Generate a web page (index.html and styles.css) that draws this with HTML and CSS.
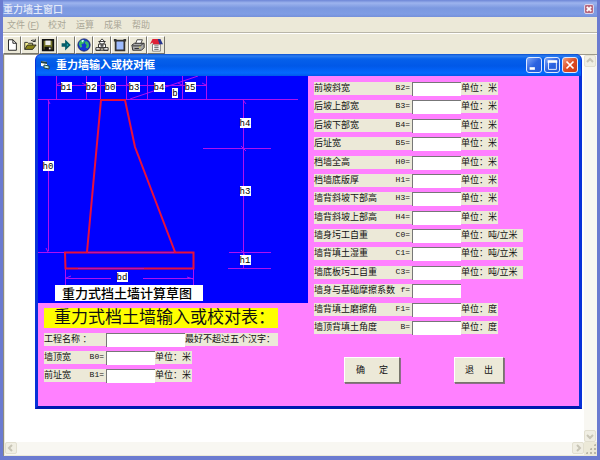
FILE: index.html
```html
<!DOCTYPE html>
<html lang="zh">
<head>
<meta charset="utf-8">
<title>重力墙主窗口</title>
<link rel="stylesheet" href="styles.css">
</head>
<body>
<div class="app">
  <header class="app-title">
    <h1>重力墙主窗口</h1>
    <button class="app-close" type="button" aria-label="关闭"><svg viewBox="0 0 9 9"><path d="M2 2l5 5M7 2l-5 5"/></svg></button>
  </header>
  <nav class="menu">
    <button type="button">文件 (<u>F</u>)</button><button type="button">校对</button><button type="button">运算</button><button type="button">成果</button><button type="button">帮助</button>
  </nav>
  <div class="toolbar">
    <button type="button" aria-label="新建"><svg viewBox="0 0 16 16"><path d="M4 2h5l4 4v8H4z" fill="#fff" stroke="#111"/><path d="M9 2v4h4" fill="none" stroke="#111"/></svg></button>
    <button type="button" aria-label="打开"><svg viewBox="0 0 16 16"><path d="M2 13V5h3l1 1h5v2" fill="#f5ef92" stroke="#222"/><path d="M2 13l3-5h10l-4 5z" fill="#8a8418" stroke="#222"/><path d="M9 3q3-2 5 1M14 1v3h-3" fill="none" stroke="#222"/></svg></button>
    <button type="button" aria-label="保存"><svg viewBox="0 0 16 16"><path d="M2 2h12v12H2z" fill="#77772b" stroke="#111" stroke-width="2"/><path d="M5 3h6v5H5z" fill="#eee"/><path d="M4 10h8v4H4z" fill="#111"/><path d="M9 11h2v2H9z" fill="#eee"/></svg></button>
    <button type="button" aria-label="转到"><svg viewBox="0 0 16 16"><path d="M4 7h4V4l4 4-4 4V9H4z" fill="#18b6bd" stroke="#075d68" stroke-width="2"/></svg></button>
    <button type="button" aria-label="网络"><svg viewBox="0 0 16 16"><circle cx="8" cy="8" r="7" fill="#1537d3" stroke="#102066"/><path d="M3 4l3-2 3 1-1 3-3 1 1 3-2 1-2-4zM10 3l3 2 1 4-2 3-2-1 1-3-2-2z" fill="#36b866"/><path d="M5 3l2-1 1 1-2 2z" fill="#d6f7ff"/></svg></button>
    <button type="button" aria-label="结构"><svg viewBox="0 0 16 16"><g fill="#fff" stroke="#222"><path d="M5 4l3-3 3 3-1 3H6z"/><path d="M4 7h8v4H4zM1 11h5v3H1zM10 11h5v3h-5z"/></g><path d="M4 4h8M8 7v6M6 9h4M1 14h14" stroke="#222"/></svg></button>
    <button type="button" aria-label="图形"><svg viewBox="0 0 16 16"><path d="M3 3h10v11H3z" fill="#9ebcff" stroke="#333" stroke-width="2"/><path d="M1 1h3v3H1zM12 1h3v3h-3z" fill="#333"/></svg></button>
    <button type="button" aria-label="打印"><svg viewBox="0 0 16 16"><path d="M5 7l2-5h6l-2 5z" fill="#fff" stroke="#333"/><path d="M1 8l3-2h11v5l-3 3H2z" fill="#aaa" stroke="#222"/><path d="M2 9h9l3-3M4 12h5" fill="none" stroke="#222"/><path d="M9 10h2v1H9z" fill="#e6df30"/></svg></button>
    <button type="button" aria-label="帮助"><svg viewBox="0 0 16 16"><path d="M4 7h9v8H4z" fill="#fff" stroke="#777"/><path d="M1 7l3-6h9v6H5L4 5z" fill="#df2035"/><path d="M10 1h3l3 6h-4z" fill="#26358e"/><path d="M6 9h5M6 11h5M6 13h5" stroke="#555"/></svg></button>
  </div>
  <main class="desktop">
    <div class="canvas"></div>
    <div class="scroll vertical"><button type="button" aria-label="向上"><svg viewBox="0 0 10 10"><path d="M2 6l3-3 3 3"/></svg></button><button type="button" aria-label="向下"><svg viewBox="0 0 10 10"><path d="M2 4l3 3 3-3"/></svg></button></div>
    <div class="scroll horizontal"><button type="button" aria-label="向左"><svg viewBox="0 0 10 10"><path d="M6 2L3 5l3 3"/></svg></button><button type="button" aria-label="向右"><svg viewBox="0 0 10 10"><path d="M4 2l3 3-3 3"/></svg></button></div>
    <div class="grip"></div>
  </main>

  <section class="dialog" aria-labelledby="dialog-title">
    <header class="dialog-title">
      <svg class="form-icon" viewBox="0 0 10 10"><path d="M1 1l6 1v5L1 6z" fill="#fff"/><path d="M1 1l6 1v2L1 3z" fill="#244"/><path d="M4 5l5 1v3L4 8z" fill="#b8e8e4" stroke="#244"/></svg>
      <h2 id="dialog-title">重力墙输入或校对框</h2>
      <div class="window-buttons">
        <button type="button" aria-label="最小化"><svg viewBox="0 0 16 16"><path d="M3 12h6" stroke-width="3"/></svg></button>
        <button type="button" aria-label="最大化"><svg viewBox="0 0 16 16"><path d="M4 4h9v9H4z"/><path d="M3 4h11" stroke-width="3"/></svg></button>
        <button type="button" class="close" aria-label="关闭"><svg viewBox="0 0 16 16"><path d="M4 4l8 8M12 4l-8 8" stroke-width="2"/></svg></button>
      </div>
    </header>
    <form class="dialog-body">
      <div class="left">
        <svg class="sketch" viewBox="0 0 270 227" role="img" aria-label="重力式挡土墙计算草图">
          <rect width="270" height="227" fill="#00f"/>
          <g class="dim">
            <path d="M18.500 0v23M48.500 0v23M62.500 0v23M88.500 0v23M109.500 0v23M144.500 0v23M168.500 0v23M18 9.500h150M0 23.500h260M92 23L160 0"/>
            <path d="M10.500 24v151M0 176.500h27M205.500 24v169M165 72.500h68M191 176.500h42M190 192.500h43M27.500 192v17M155.500 192v17M28 202.500h45M105 202.500h50"/>
            <path d="M10 24l2 4M10 176l-2-4M205 24l3 4M203 70l5 5M203 174l4 5M28 202l5-2M155 203l-6-2M18 9l4-2M168 9l-4-2M48 9l-4-2M88 9l4-2M144 9l-4-2"/>
          </g>
          <path class="wall" d="M49 176L63 24H87L97 71L137 176M27 176.500H155.500V192.500H27.500z"/>
          <path class="accent" d="M50 176.500h86M40 192.500h66"/>
          <g fill="#fff">
            <path d="M23 6h11v10H23zM48 6h11v10H48zM67 6h11v10H67zM91 6h11v10H91zM116 6h11v10H116zM134 12h6v10H134zM147 6h11v10H147z"/>
            <path d="M5 85h11v10H5zM202 42h11v10H202zM202 110h11v10H202zM202 179h11v10H202zM79 196h11v10H79zM17 209h148v16H17z"/>
          </g>
          <g class="mark">
            <text x="28" y="14">b1</text><text x="53" y="14">b2</text><text x="72" y="14">b0</text><text x="96" y="14">b3</text><text x="121" y="14">b4</text><text x="137" y="20">b</text><text x="152" y="14">b5</text>
            <text x="10" y="93">h0</text><text x="207" y="50">h4</text><text x="207" y="118">h3</text><text x="207" y="187">h1</text><text x="84" y="204">bd</text>
          </g>
          <text class="caption" x="89" y="222">重力式挡土墙计算草图</text>
        </svg>
        <div class="left-form">
          <h3>重力式档土墙输入或校对表：</h3>
          <div class="row"><label for="name">工程名称 ：</label><input id="name" class="wide"><span>最好不超过五个汉字：</span></div>
          <div class="row"><label for="b0">墙顶宽<b>B0=</b></label><input id="b0"><span>单位：米</span></div>
          <div class="row"><label for="b1">前址宽<b>B1=</b></label><input id="b1"><span>单位：米</span></div>
        </div>
      </div>
      <div class="right">
        <div class="rows">
          <div class="row"><label for="b2">前坡斜宽<b>B2=</b></label><input id="b2"><span>单位：米</span></div>
          <div class="row"><label for="b3">后坡上部宽<b>B3=</b></label><input id="b3"><span>单位：米</span></div>
          <div class="row"><label for="b4">后坡下部宽<b>B4=</b></label><input id="b4"><span>单位：米</span></div>
          <div class="row"><label for="b5">后址宽<b>B5=</b></label><input id="b5"><span>单位：米</span></div>
          <div class="row"><label for="h0">档墙全高<b>H0=</b></label><input id="h0"><span>单位：米</span></div>
          <div class="row"><label for="h1">档墙底版厚<b>H1=</b></label><input id="h1"><span>单位：米</span></div>
          <div class="row"><label for="h3">墙背斜坡下部高<b>H3=</b></label><input id="h3"><span>单位：米</span></div>
          <div class="row"><label for="h4">墙背斜坡上部高<b>H4=</b></label><input id="h4"><span>单位：米</span></div>
          <div class="row"><label for="c0">墙身圬工自重<b>C0=</b></label><input id="c0"><span class="long">单位：吨/立米</span></div>
          <div class="row"><label for="c1">墙背填土湿重<b>C1=</b></label><input id="c1"><span class="long">单位：吨/立米</span></div>
          <div class="row"><label for="c3">墙底板圬工自重<b>C3=</b></label><input id="c3"><span class="long">单位：吨/立米</span></div>
          <div class="row"><label for="f">墙身与基础摩擦系数<b>f=</b></label><input id="f"></div>
          <div class="row"><label for="f1">墙背填土磨擦角<b>F1=</b></label><input id="f1"><span>单位：度</span></div>
          <div class="row"><label for="b">墙顶背填土角度<b>B=</b></label><input id="b"><span>单位：度</span></div>
        </div>
        <div class="actions"><button type="button" class="ok"><span>确</span><span>定</span></button><button type="button" class="exit"><span>退</span><span>出</span></button></div>
      </div>
    </form>
  </section>
</div>
</body>
</html>
```
FILE: styles.css
```css
* { box-sizing: border-box; }
body { margin: 0; font: 9px/12px "Liberation Sans", "Noto Sans CJK SC", sans-serif; color: #111; }
h1, h2, h3 { margin: 0; }
button { padding: 0; font: inherit; color: inherit; border: 0; background: none; }
svg { display: block; }

.app { position: relative; display: flex; flex-direction: column; min-height: 100vh; background: #ece9d8; border: solid #6b7bd0; border-width: 0 3px 4px; }
.app-title { display: flex; justify-content: space-between; align-items: center; height: 17px; padding: 0 3px 0 0; background: linear-gradient(#6d86d6, #9db4ee 3px, #7b98e0 8px, #7f9de4 14px, #7590da); }
.app-title h1 { padding-top: 2px; font-size: 10px; line-height: 16px; font-weight: 500; color: #e4eaf9; }
.app-close { width: 10px; height: 10px; border: 1px solid #dcd6ec; border-radius: 2px; background: #b9687c; }
.app-close svg { width: 8px; height: 8px; fill: none; stroke: #fff; stroke-width: 2; }

.menu { display: flex; gap: 10px; height: 16px; padding: 0 4px; border-bottom: 1px solid #b8b5a8; color: #aaa797; }
.menu button:first-child { width: 31px; }
.menu button { line-height: 14px; white-space: nowrap; }
.toolbar { display: flex; height: 22px; padding: 2px 0 0; border-top: 1px solid #fff; border-bottom: 1px solid #9d9a8c; }
.toolbar button { display: grid; place-items: center; width: 18px; height: 18px; border: 1px solid; border-color: #fff #77756b #77756b #fff; }
.toolbar svg { width: 14px; height: 14px; }

.desktop { flex: 1; display: grid; grid-template: 1fr 13px / 1fr 13px; padding: 0 0 1px 1px; border-left: 1px solid #8c8a80; }
.canvas { background: #fff; }
.scroll { display: flex; justify-content: space-between; background: #f8f7f2; }
.vertical { flex-direction: column; }
.scroll button { display: grid; place-items: center; width: 12px; height: 12px; border: 1px solid #e2dfd0; border-radius: 2px; background: #f0eee3; }
.scroll svg { width: 10px; height: 10px; fill: none; stroke: #c8c5b6; stroke-width: 2; }
.grip { background: radial-gradient(circle at 2px 2px, #bbb8a8 1px, transparent 1px) 1px 1px / 4px 4px; clip-path: polygon(100% 0, 100% 100%, 0 100%); }

.dialog { position: absolute; inset: 54px 15px 47px 32px; display: flex; flex-direction: column; border: solid #0831d9; border-width: 0 3px 3px; border-bottom-color: #0019b0; border-radius: 6px 6px 0 0; background: #0831d9; }
.dialog-title { display: flex; align-items: center; gap: 6px; height: 22px; flex: none; margin: 0 -2px; padding: 0 3px 0 4px; border-radius: 6px 6px 0 0; background: linear-gradient(#0a4fd0, #2a7cf0 2px, #0660ea 5px, #0058e8 12px, #0468ff 19px, #0058e8); }
.form-icon { width: 10px; height: 10px; }
.dialog-title h2 { flex: 1; font-size: 11px; line-height: 20px; font-weight: bold; color: #fff; }
.window-buttons { display: flex; gap: 2px; }
.window-buttons button { width: 16px; height: 16px; border: 1px solid #dfe9ff; border-radius: 3px; background: linear-gradient(135deg, #7fa6f8, #2c63e0 50%, #2458d8); }
.window-buttons .close { background: linear-gradient(135deg, #f0a080, #dc4a22 50%, #cc3c18); }
.window-buttons svg { width: 14px; height: 14px; fill: none; stroke: #fff; }

.dialog-body { flex: 1; display: grid; grid-template-columns: 270px 1fr; background: #ff80ff; }
.left-form { display: flex; flex-direction: column; gap: 5px; padding: 5px 6px; }
.left-form h3 { width: 234px; padding-left: 10px; background: #ff0; font-size: 17px; line-height: 20px; font-weight: 400; white-space: nowrap; }
.left-form label { width: 62px; }
.left-form label b { padding-right: 2px; }
.right { display: flex; flex-direction: column; padding: 6px; }
.rows { flex: 1; display: flex; flex-direction: column; justify-content: space-between; }

.row { display: flex; height: 13px; white-space: nowrap; font-family: "Liberation Sans", "Noto Sans CJK TC", sans-serif; }
.row label { display: flex; justify-content: space-between; background: #ece9d8; }
.right .row label { width: 98px; padding-right: 2px; }
.row b { font: 8px/12px "Liberation Mono", monospace; }
.row input { width: 49px; height: 14px; padding: 0 2px; border: 0; border-top: 1px solid #777; border-left: 1px solid #777; background: #fff; font: inherit; }
.row .wide { width: 79px; }
.row span { width: 37px; background: #ece9d8; }
.row .long { width: 62px; }
.row .wide + span { width: 93px; }

.actions { display: flex; gap: 54px; padding: 23px 30px 17px; }
.actions button { display: flex; justify-content: center; align-items: center; height: 26px; border: 1px solid; border-color: #fff #77756b #77756b #fff; background: #ece9d8; box-shadow: 1px 1px #8d6d89; }
.actions .ok { width: 56px; gap: 14px; }
.actions .exit { width: 50px; gap: 10px; }

.sketch { width: 100%; }
.dim { fill: none; stroke: #b010f0; }
.wall { fill: none; stroke: #e8103c; stroke-width: 2; }
.accent { stroke: #d010a0; stroke-width: 1; }
.mark { font: 9px "Liberation Mono", monospace; text-anchor: middle; }
.caption { font: 500 13px "Noto Sans CJK SC", sans-serif; text-anchor: middle; }
```
